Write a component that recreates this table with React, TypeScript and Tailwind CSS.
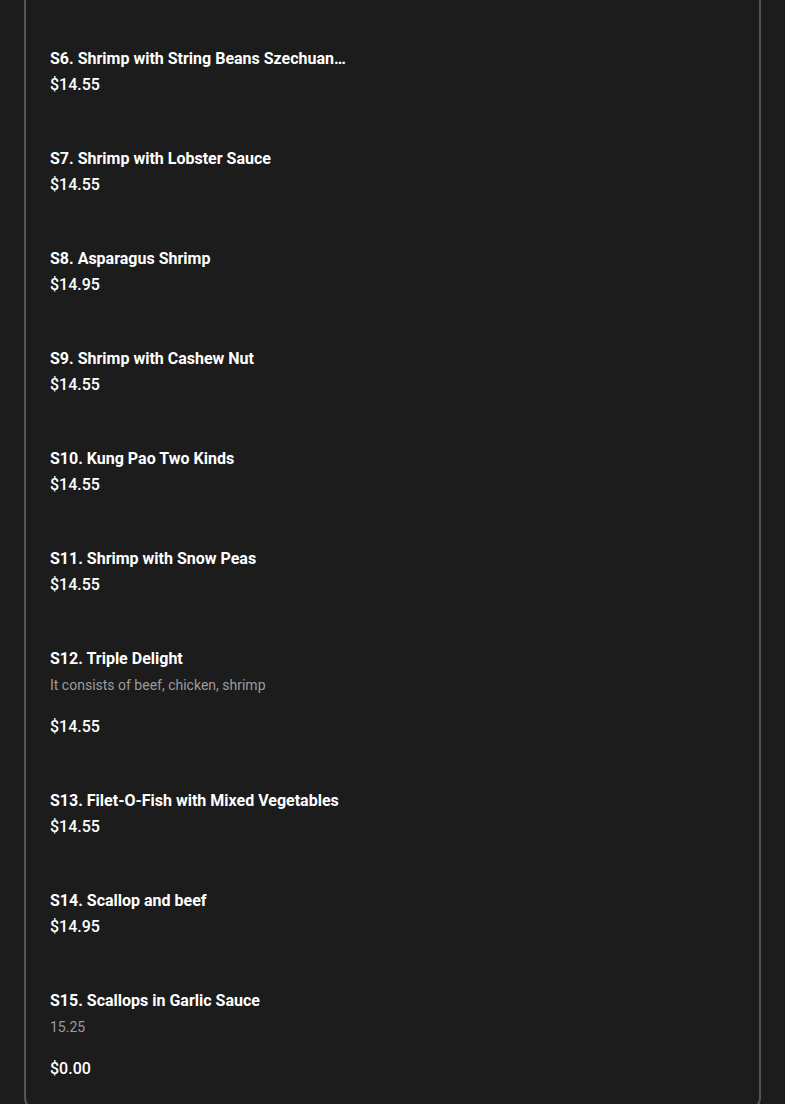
type MenuItem = {
  name: string;
  price: string;
  description?: string;
};

const items: MenuItem[] = [
  { name: "S6. Shrimp with String Beans Szechuan Style", price: "$14.55" },
  { name: "S7. Shrimp with Lobster Sauce", price: "$14.55" },
  { name: "S8. Asparagus Shrimp", price: "$14.95" },
  { name: "S9. Shrimp with Cashew Nut", price: "$14.55" },
  { name: "S10. Kung Pao Two Kinds", price: "$14.55" },
  { name: "S11. Shrimp with Snow Peas", price: "$14.55" },
  {
    name: "S12. Triple Delight",
    description: "It consists of beef, chicken, shrimp",
    price: "$14.55",
  },
  { name: "S13. Filet-O-Fish with Mixed Vegetables", price: "$14.55" },
  { name: "S14. Scallop and beef", price: "$14.95" },
  { name: "S15. Scallops in Garlic Sauce", description: "15.25", price: "$0.00" },
];

function MenuRow({ item }: { item: MenuItem }) {
  return (
    <div className="py-6">
      <p className="max-w-[298px] truncate text-base font-bold leading-[26px] text-white">
        {item.name}
      </p>
      {item.description && (
        <p className="mb-4 text-sm leading-[26px] text-[#9b9b9b]">{item.description}</p>
      )}
      <p className="text-base font-medium leading-[26px] text-white">{item.price}</p>
    </div>
  );
}

export default function App() {
  return (
    <main
      className="min-h-screen bg-[#1c1c1c] px-6"
      style={{ fontFamily: "Roboto, 'Liberation Sans', sans-serif" }}
    >
      <div className="rounded-b-xl border-2 border-t-0 border-[#555555] px-6 pt-[22px] pb-[2px]">
        {items.map((item) => (
          <MenuRow key={item.name} item={item} />
        ))}
      </div>
    </main>
  );
}
